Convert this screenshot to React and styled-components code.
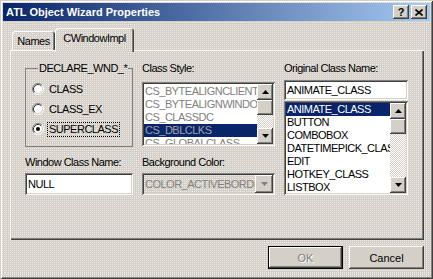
import React from "react";
import styled, { createGlobalStyle, css } from "styled-components";

const face = "#d4d0c8";

const GlobalStyle = createGlobalStyle`
  body {
    margin: 0;
    background: ${face};
    font-family: "Liberation Sans", Arial, sans-serif;
    font-size: 11px;
  }
`;

// stippled dialog face, like the screenshot's dither
const dither = css`
  background-color: ${face};
  background-image: conic-gradient(at 1px 1px, transparent 75%, #ecebe7 0);
  background-size: 2px 2px;
`;

const raised = css`
  box-shadow: inset -1px -1px #404040, inset 1px 1px #fff, inset -2px -2px #808080,
    inset 2px 2px ${face};
`;

const sunken = css`
  box-shadow: inset 1px 1px #808080, inset -1px -1px #fff, inset 2px 2px #404040,
    inset -2px -2px ${face};
`;

const Window = styled.div`
  width: 433px;
  height: 279px;
  box-sizing: border-box;
  padding: 3px;
  display: flex;
  flex-direction: column;
  ${dither}
  box-shadow: inset 1px 1px ${face}, inset -1px -1px #404040, inset 2px 2px #fff,
    inset -2px -2px #808080;
`;

const TitleBar = styled.div`
  height: 18px;
  display: flex;
  align-items: center;
  padding: 0 3px 0 3px;
  background: linear-gradient(90deg, #0a246a, #a6caf0);
  color: #fff;
  font-weight: bold;
  font-size: 11px;
`;

const TitleText = styled.span`
  flex: 1;
`;

const TitleButtons = styled.div`
  display: flex;
  gap: 2px;
`;

const TitleButton = styled.div`
  width: 16px;
  height: 14px;
  display: flex;
  align-items: center;
  justify-content: center;
  background: ${face};
  color: #000;
  font-weight: bold;
  font-size: 11px;
  line-height: 14px;
  ${raised}
`;

const Body = styled.div`
  flex: 1;
  display: flex;
  flex-direction: column;
  padding: 7px 6px 0 7px;
  letter-spacing: -0.5px;
`;

const TabRow = styled.div`
  display: flex;
  align-items: flex-start;
  height: 22px;
  padding-left: 2px;
  position: relative;
  z-index: 1;
`;

const Tab = styled.div`
  width: ${(p) => p.$w}px;
  height: ${(p) => (p.$active ? 24 : 19)}px;
  margin-top: ${(p) => (p.$active ? 0 : 3)}px;
  box-sizing: border-box;
  padding-top: 4px;
  text-align: center;
  color: #000;
  border-radius: 3px 3px 0 0;
  ${dither}
  box-shadow: inset 1px 1px #fff, inset -1px 0 #404040, inset -2px 0 #808080;
`;

const Panel = styled.div`
  height: 190px;
  box-sizing: border-box;
  padding: 12px 0 0 15px;
  display: flex;
  gap: 9px;
  box-shadow: inset 1px 1px #fff, inset -1px -1px #404040, inset -2px -2px #808080;
`;

const Column = styled.div`
  width: ${(p) => p.$w}px;
  display: flex;
  flex-direction: column;
`;

const Label = styled.div`
  height: 13px;
  line-height: 13px;
  color: #000;
  white-space: nowrap;
  margin-top: ${(p) => p.$mt || 0}px;
`;

const GroupBox = styled.fieldset`
  margin: 0;
  height: 85px;
  box-sizing: border-box;
  padding: 6px 0 0 6px;
  border: 1px solid #808080;
  min-width: 0;
  display: flex;
  flex-direction: column;
  gap: 4px;
`;

const Legend = styled.legend`
  margin-left: 6px;
  padding: 0 1px;
  height: 13px;
  line-height: 13px;
  color: #000;
`;

const RadioRow = styled.div`
  height: 16px;
  display: flex;
  align-items: center;
  gap: 3px;
`;

const RadioLabel = styled.span`
  border: 1px ${(p) => (p.$focus ? "dotted #000" : "solid transparent")};
  padding: 0 1px;
  line-height: 13px;
  color: #000;
`;

const Edit = styled.div`
  height: ${(p) => p.$h}px;
  margin-top: ${(p) => p.$mt || 0}px;
  box-sizing: border-box;
  padding: 0 3px;
  display: flex;
  align-items: center;
  background: #fff;
  color: #000;
  white-space: nowrap;
  ${sunken}
`;

const ListBox = styled.div`
  height: ${(p) => p.$h}px;
  margin-top: ${(p) => p.$mt || 0}px;
  box-sizing: border-box;
  padding: 2px;
  display: flex;
  background: #fff;
  ${sunken}
`;

const Items = styled.div`
  flex: 1;
  min-width: 0;
  overflow: hidden;
  padding-top: ${(p) => p.$pt || 0}px;
`;

const Item = styled.div`
  height: 13px;
  line-height: 13px;
  padding-left: 1px;
  white-space: nowrap;
  overflow: hidden;
  color: ${(p) =>
    p.$disabled ? (p.$selected ? "#a3a3a3" : "#808080") : p.$selected ? "#fff" : "#000"};
  background: ${(p) => (p.$selected ? "#0a246a" : "transparent")};
`;

const ScrollBar = styled.div`
  width: 16px;
  display: flex;
  flex-direction: column;
`;

const ScrollButton = styled.div`
  width: 16px;
  flex: 0 0 ${(p) => p.$h || 16}px;
  height: ${(p) => p.$h || 16}px;
  display: flex;
  align-items: center;
  justify-content: center;
  background: ${face};
  ${raised}
`;

const Track = styled.div`
  flex: 1;
  background: repeating-conic-gradient(${face} 0 25%, #fff 0 50%) 0 0 / 2px 2px;
`;

const Combo = styled.div`
  height: 22px;
  margin-top: 4px;
  box-sizing: border-box;
  padding: 2px;
  display: flex;
  align-items: stretch;
  ${dither}
  ${sunken}
`;

const ComboText = styled.div`
  flex: 1;
  min-width: 0;
  overflow: hidden;
  white-space: nowrap;
  line-height: 18px;
  padding-left: 1px;
  color: #808080;
`;

const ButtonRow = styled.div`
  display: flex;
  justify-content: flex-end;
  gap: 6px;
  margin-top: 6px;
`;

const Button = styled.div`
  width: 75px;
  height: 23px;
  box-sizing: border-box;
  display: flex;
  align-items: center;
  justify-content: center;
  background: ${face};
  color: ${(p) => (p.$disabled ? "#808080" : "#000")};
  text-shadow: ${(p) => (p.$disabled ? "1px 1px #fff" : "none")};
  letter-spacing: 0;
  ${(p) =>
    p.$default
      ? css`
          box-shadow: inset 0 0 0 1px #000, inset -2px -2px #404040, inset 2px 2px #fff,
            inset -3px -3px #808080;
        `
      : raised}
`;

const Arrow = ({ down, color = "#000" }) => (
  <svg width="7" height="4" viewBox="0 0 7 4">
    <polygon points={down ? "0,0 7,0 3.5,4" : "0,4 7,4 3.5,0"} fill={color} />
  </svg>
);

const CloseIcon = () => (
  <svg width="8" height="7" viewBox="0 0 8 7">
    <path d="M0.5 0.5 L7.5 6.5 M7.5 0.5 L0.5 6.5" stroke="#000" strokeWidth="1.6" />
  </svg>
);

const Radio = ({ checked }) => (
  <svg width="12" height="12" viewBox="0 0 12 12">
    <circle cx="6" cy="6" r="4.5" fill="#fff" />
    <path d="M2.11 9.89 A5.5 5.5 0 0 1 9.89 2.11" stroke="#808080" fill="none" />
    <path d="M9.89 2.11 A5.5 5.5 0 0 1 2.11 9.89" stroke="#fff" fill="none" />
    <path d="M2.82 9.18 A4.5 4.5 0 0 1 9.18 2.82" stroke="#404040" fill="none" />
    <path d="M9.18 2.82 A4.5 4.5 0 0 1 2.82 9.18" stroke={face} fill="none" />
    {checked && <circle cx="6" cy="6" r="2" fill="#000" />}
  </svg>
);

const classStyles = [
  "CS_BYTEALIGNCLIENT",
  "CS_BYTEALIGNWINDOW",
  "CS_CLASSDC",
  "CS_DBLCLKS",
  "CS_GLOBALCLASS",
];

const classNames = [
  "ANIMATE_CLASS",
  "BUTTON",
  "COMBOBOX",
  "DATETIMEPICK_CLASS",
  "EDIT",
  "HOTKEY_CLASS",
  "LISTBOX",
];

const radios = [
  { label: "CLASS" },
  { label: "CLASS_EX" },
  { label: "SUPERCLASS", checked: true },
];

export default function App() {
  return (
    <>
      <GlobalStyle />
      <Window>
        <TitleBar>
          <TitleText>ATL Object Wizard Properties</TitleText>
          <TitleButtons>
            <TitleButton>?</TitleButton>
            <TitleButton>
              <CloseIcon />
            </TitleButton>
          </TitleButtons>
        </TitleBar>
        <Body>
          <TabRow>
            <Tab $w={43}>Names</Tab>
            <Tab $w={79} $active>
              CWindowImpl
            </Tab>
          </TabRow>
          <Panel>
            <Column $w={108}>
              <GroupBox>
                <Legend>DECLARE_WND_*</Legend>
                {radios.map((r) => (
                  <RadioRow key={r.label}>
                    <Radio checked={r.checked} />
                    <RadioLabel $focus={r.checked}>{r.label}</RadioLabel>
                  </RadioRow>
                ))}
              </GroupBox>
              <Label $mt={9}>Window Class Name:</Label>
              <Edit $h={22} $mt={4}>
                NULL
              </Edit>
            </Column>
            <Column $w={133}>
              <Label>Class Style:</Label>
              <ListBox $h={64} $mt={7}>
                <Items $pt={1}>
                  {classStyles.map((s) => (
                    <Item key={s} $disabled $selected={s === "CS_DBLCLKS"}>
                      {s}
                    </Item>
                  ))}
                </Items>
                <ScrollBar>
                  <ScrollButton>
                    <Arrow />
                  </ScrollButton>
                  <ScrollButton $h={15} />
                  <Track />
                  <ScrollButton>
                    <Arrow down />
                  </ScrollButton>
                </ScrollBar>
              </ListBox>
              <Label $mt={10}>Background Color:</Label>
              <Combo>
                <ComboText>COLOR_ACTIVEBORDER</ComboText>
                <ScrollButton $h={18}>
                  <Arrow down color="#808080" />
                </ScrollButton>
              </Combo>
            </Column>
            <Column $w={124}>
              <Label>Original Class Name:</Label>
              <Edit $h={20} $mt={5}>
                ANIMATE_CLASS
              </Edit>
              <ListBox $h={94} $mt={1}>
                <Items>
                  {classNames.map((s) => (
                    <Item key={s} $selected={s === "ANIMATE_CLASS"}>
                      {s}
                    </Item>
                  ))}
                </Items>
                <ScrollBar>
                  <ScrollButton>
                    <Arrow />
                  </ScrollButton>
                  <ScrollButton $h={15} />
                  <Track />
                  <ScrollButton>
                    <Arrow down />
                  </ScrollButton>
                </ScrollBar>
              </ListBox>
            </Column>
          </Panel>
          <ButtonRow>
            <Button $default $disabled>
              OK
            </Button>
            <Button>Cancel</Button>
          </ButtonRow>
        </Body>
      </Window>
    </>
  );
}
